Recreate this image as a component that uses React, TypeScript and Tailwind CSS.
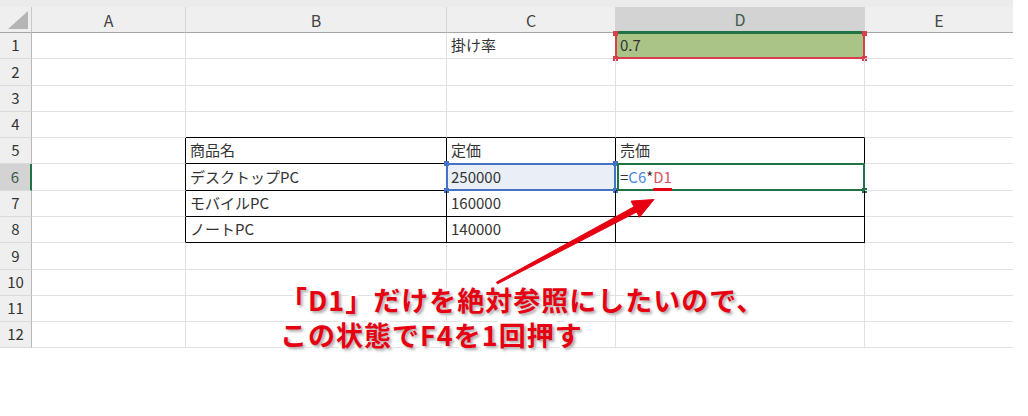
import React from "react";

const COLS = ["A", "B", "C", "D", "E"];
const WIDTHS = ["w-[154px]", "w-[261px]", "w-[169px]", "w-[249px]", "w-[148px]"];
const ROWS = [1, 2, 3, 4, 5, 6, 7, 8, 9, 10, 11, 12];
const TALL = [2, 6, 9];

const TEXT: Record<string, string> = {
  C1: "掛け率",
  B5: "商品名",
  C5: "定価",
  D5: "売価",
  B6: "デスクトップPC",
  B7: "モバイルPC",
  C7: "160000",
  B8: "ノートPC",
  C8: "140000",
};

function Handle({ className }: { className: string }) {
  return <span className={`absolute h-[5px] w-[5px] ${className}`} />;
}

function Cell({ r, c, ci }: { r: number; c: string; ci: number }) {
  const inTable = r >= 5 && r <= 8 && ci >= 1 && ci <= 3;
  const rightBlack = inTable || (c === "A" && r >= 5 && r <= 8);
  const bottomBlack = inTable || (r === 4 && ci >= 1 && ci <= 3);
  const right = c === "E" ? "" : rightBlack ? "border-r border-r-black" : "border-r border-r-[#e1e1e1]";
  const bottom = bottomBlack ? "border-b border-b-black" : "border-b border-b-[#e1e1e1]";
  const base = `relative shrink-0 box-border ${WIDTHS[ci]} ${right} ${bottom} px-[4px] flex items-center text-[15px] text-[#333]`;
  const key = `${c}${r}`;

  if (key === "D1") {
    return (
      <div className={`${base} bg-[#aac387]`}>
        <span className="absolute -inset-[1px] border-2 border-[#d5404a] border-t-[#217346]" />
        <Handle className="-left-[3px] -top-[2px] bg-[#d5404a]" />
        <Handle className="-right-[3px] -top-[2px] bg-[#d5404a]" />
        <Handle className="-left-[3px] -bottom-[3px] bg-[#d5404a]" />
        <Handle className="-right-[3px] -bottom-[3px] bg-[#d5404a]" />
        <span className="relative">0.7</span>
      </div>
    );
  }
  if (key === "C6") {
    return (
      <div className={`${base} bg-[#e9eef7]`}>
        <span className="absolute -inset-[1px] border-2 border-[#4472c4]" />
        <Handle className="-left-[3px] -top-[3px] bg-[#4472c4]" />
        <Handle className="-right-[3px] -top-[3px] bg-[#4472c4]" />
        <Handle className="-left-[3px] -bottom-[3px] bg-[#4472c4]" />
        <Handle className="-right-[3px] -bottom-[3px] bg-[#4472c4]" />
        <span className="relative">250000</span>
      </div>
    );
  }
  if (key === "D6") {
    return (
      <div className={base}>
        <span className="absolute left-[1px] -top-[1px] -right-[1px] -bottom-[1px] border-2 border-[#217346]" />
        <Handle className="-right-[3px] -bottom-[3px] bg-[#217346]" />
        <span className="relative">
          =<span className="text-[#4a86e8]">C6</span>*
          <span className="text-[#d9545e] underline decoration-[#e60012] decoration-[3px] underline-offset-[5px]">
            D1
          </span>
        </span>
      </div>
    );
  }
  return <div className={base}>{TEXT[key] ?? ""}</div>;
}

export default function App() {
  return (
    <div className="relative h-[416px] w-[1028px] overflow-hidden bg-white font-['Noto_Sans_CJK_JP','Noto_Sans',sans-serif]">
      <div className="h-[7px] w-[1013px] bg-[#ebebeb]" />

      {/* column headers */}
      <div className="flex h-[26px]">
        <div className="relative w-[32px] shrink-0 box-border border-r border-r-[#c8c8c8] border-b border-b-[#a6a6a6] bg-[#efefef]">
          <svg className="absolute bottom-[3px] right-[3px]" width="20" height="18" viewBox="0 0 20 18">
            <polygon points="20,0 20,18 0,18" fill="#b5b5b5" />
          </svg>
        </div>
        {COLS.map((c, ci) => (
          <div
            key={c}
            className={`shrink-0 box-border ${WIDTHS[ci]} flex items-center justify-center text-[16px] ${
              c === "D"
                ? "bg-[#d3d3d3] border-b-2 border-b-[#217346] text-[#3c5e48]"
                : "bg-[#efefef] border-b border-b-[#a6a6a6] text-[#444]"
            } ${c === "E" ? "" : "border-r border-r-[#d4d4d4]"}`}
          >
            {c}
          </div>
        ))}
      </div>

      {/* rows */}
      {ROWS.map((r) => (
        <div key={r} className={`flex ${TALL.includes(r) ? "h-[27px]" : "h-[26px]"}`}>
          <div
            className={`w-[32px] shrink-0 box-border border-b border-b-[#dadada] flex items-center justify-center text-[15px] ${
              r === 6
                ? "bg-[#d3d3d3] border-r-2 border-r-[#217346] text-[#3c5e48]"
                : "bg-[#efefef] border-r border-r-[#b9b9b9] text-[#333]"
            }`}
          >
            {r}
          </div>
          {COLS.map((c, ci) => (
            <Cell key={c} r={r} c={c} ci={ci} />
          ))}
        </div>
      ))}

      {/* arrow */}
      <svg className="pointer-events-none absolute left-0 top-0" width="1028" height="416">
        <polygon
          points="496.5,282.1 633.9,206.8 631.1,201.1 654,199.5 639.5,217.3 636.7,212 497.5,283.9"
          fill="#e60012"
          stroke="#e60012"
          strokeWidth="1"
          strokeLinejoin="round"
        />
      </svg>

      {/* annotation */}
      <div className="absolute left-[280px] top-[282px] text-[27px] font-bold leading-[35px] tracking-[1px] text-[#e60012] [-webkit-text-stroke:6px_#fff] [paint-order:stroke_fill] [text-shadow:2px_2px_3px_rgba(0,0,0,0.35)]">
        <div>「D1」だけを絶対参照にしたいので、</div>
        <div>この状態でF4を1回押す</div>
      </div>
    </div>
  );
}
